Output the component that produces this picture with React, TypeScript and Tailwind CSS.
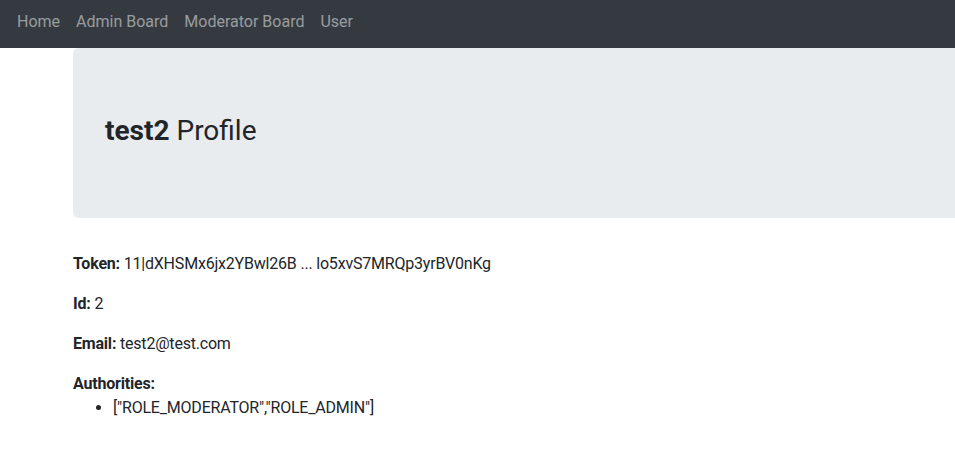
const links = ["Home", "Admin Board", "Moderator Board", "User"];

export default function App() {
  return (
    <div className="min-h-[468px] overflow-hidden bg-white font-['Roboto',sans-serif] text-[16px] leading-[24px] text-[#212529]">
      <nav className="flex h-12 items-start bg-[#343a40] pl-[9px] pt-[10px]">
        {links.map((l) => (
          <a key={l} className="px-2 text-[16px] leading-[24px] text-white/50">
            {l}
          </a>
        ))}
      </nav>

      <div className="ml-[58px] w-[1140px] px-[15px] tracking-[-0.2px]">
        <header className="mb-8 rounded-md bg-[#e9ecef] px-8 pb-[62px] pt-[66px]">
          <h3 className="mb-2 text-[28px] font-normal leading-[34px] tracking-normal">
            <strong>test2</strong> Profile
          </h3>
        </header>

        <div className="pt-[2px]">
          <p className="mb-4">
            <strong>Token:</strong> 11|dXHSMx6jx2YBwl26B ... lo5xvS7MRQp3yrBV0nKg
          </p>
          <p className="mb-4">
            <strong>Id:</strong> 2
          </p>
          <p className="mb-4">
            <strong>Email:</strong> test2@test.com
          </p>
          <strong className="block">Authorities:</strong>
          <ul className="list-disc pl-10">
            <li>["ROLE_MODERATOR","ROLE_ADMIN"]</li>
          </ul>
        </div>
      </div>
    </div>
  );
}
